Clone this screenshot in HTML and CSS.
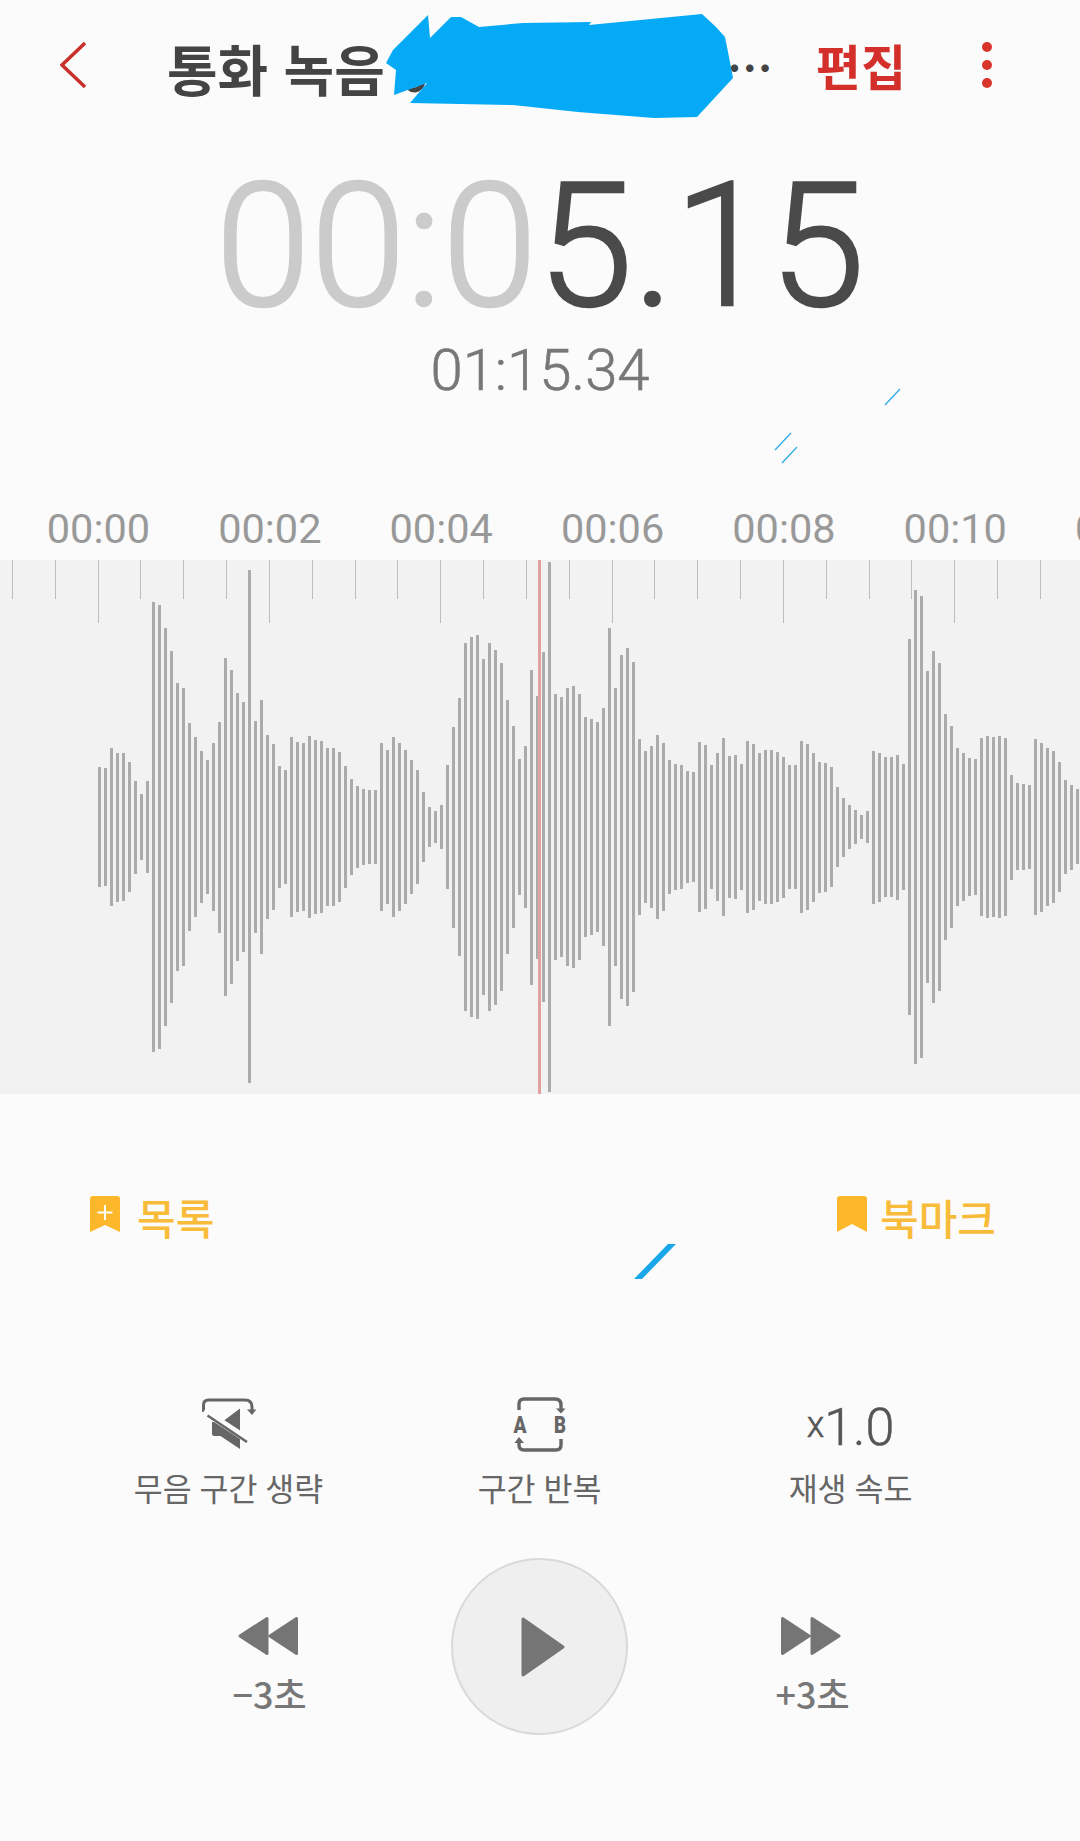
FILE: index.html
```html
<!DOCTYPE html>
<html lang="ko">
<head>
<meta charset="utf-8">
<title>통화 녹음</title>
<link rel="stylesheet" href="styles.css">
</head>
<body>
<div class="page">
  <header class="topbar">
    <svg class="back" width="26" height="48" viewBox="0 0 26 48"><path d="M25 2 2 24l23 22" fill="none" stroke="#c9302c" stroke-width="3.500"/></svg>
    <h1 class="title">통화 녹음</h1>
    <span class="more-text">…</span>
    <span class="edit">편집</span>
    <span class="kebab"><i></i><i></i><i></i></span>
  </header>

  <div class="timer"><span class="timer-dim">00:0</span>5.15</div>
  <div class="duration">01:15.34</div>

  <div class="ruler-labels">
    <span>00:00</span><span>00:02</span><span>00:04</span><span>00:06</span><span>00:08</span><span>00:10</span><span>00:12</span>
  </div>

  <section class="band">
    <div class="ticks">
      <i></i><i></i><i></i><i></i><i></i><i></i><i></i><i></i><i></i><i></i><i></i><i></i><i></i><i></i><i></i><i></i><i></i><i></i><i></i><i></i><i></i><i></i><i></i><i></i><i></i>
    </div>
    <div class="wave">
      <i style="--t:767;--b:887"></i><i style="--t:768;--b:886"></i><i style="--t:748;--b:906"></i><i style="--t:753;--b:902"></i><i style="--t:753;--b:901"></i><i style="--t:762;--b:892"></i><i style="--t:781;--b:874"></i><i style="--t:794;--b:860"></i><i style="--t:781;--b:873"></i><i style="--t:602;--b:1052"></i>
      <i style="--t:605;--b:1049"></i><i style="--t:628;--b:1026"></i><i style="--t:651;--b:1003"></i><i style="--t:683;--b:971"></i><i style="--t:688;--b:966"></i><i style="--t:723;--b:931"></i><i style="--t:737;--b:917"></i><i style="--t:751;--b:903"></i><i style="--t:760;--b:894"></i><i style="--t:743;--b:911"></i>
      <i style="--t:722;--b:933"></i><i style="--t:658;--b:996"></i><i style="--t:670;--b:984"></i><i style="--t:693;--b:961"></i><i style="--t:702;--b:952"></i><i style="--t:570;--b:1083"></i><i style="--t:721;--b:933"></i><i style="--t:700;--b:954"></i><i style="--t:735;--b:919"></i><i style="--t:744;--b:910"></i>
      <i style="--t:766;--b:888"></i><i style="--t:770;--b:884"></i><i style="--t:737;--b:917"></i><i style="--t:742;--b:912"></i><i style="--t:743;--b:911"></i><i style="--t:736;--b:918"></i><i style="--t:740;--b:914"></i><i style="--t:741;--b:913"></i><i style="--t:748;--b:906"></i><i style="--t:748;--b:906"></i>
      <i style="--t:752;--b:902"></i><i style="--t:766;--b:888"></i><i style="--t:779;--b:875"></i><i style="--t:786;--b:868"></i><i style="--t:789;--b:865"></i><i style="--t:790;--b:864"></i><i style="--t:790;--b:864"></i><i style="--t:743;--b:911"></i><i style="--t:750;--b:904"></i><i style="--t:737;--b:917"></i>
      <i style="--t:743;--b:911"></i><i style="--t:750;--b:904"></i><i style="--t:760;--b:894"></i><i style="--t:770;--b:884"></i><i style="--t:792;--b:862"></i><i style="--t:807;--b:847"></i><i style="--t:811;--b:843"></i><i style="--t:805;--b:849"></i><i style="--t:765;--b:889"></i><i style="--t:727;--b:928"></i>
      <i style="--t:698;--b:956"></i><i style="--t:643;--b:1011"></i><i style="--t:637;--b:1017"></i><i style="--t:635;--b:1019"></i><i style="--t:659;--b:995"></i><i style="--t:643;--b:1011"></i><i style="--t:650;--b:1005"></i><i style="--t:663;--b:991"></i><i style="--t:700;--b:954"></i><i style="--t:726;--b:928"></i>
      <i style="--t:759;--b:895"></i><i style="--t:746;--b:908"></i><i style="--t:670;--b:985"></i><i style="--t:696;--b:959"></i><i style="--t:652;--b:1002"></i><i style="--t:562;--b:1092"></i><i style="--t:694;--b:960"></i><i style="--t:697;--b:957"></i><i style="--t:688;--b:966"></i><i style="--t:686;--b:968"></i>
      <i style="--t:694;--b:960"></i><i style="--t:717;--b:937"></i><i style="--t:719;--b:935"></i><i style="--t:722;--b:932"></i><i style="--t:708;--b:946"></i><i style="--t:628;--b:1026"></i><i style="--t:688;--b:966"></i><i style="--t:655;--b:999"></i><i style="--t:648;--b:1006"></i><i style="--t:662;--b:992"></i>
      <i style="--t:739;--b:915"></i><i style="--t:751;--b:903"></i><i style="--t:746;--b:908"></i><i style="--t:735;--b:919"></i><i style="--t:743;--b:911"></i><i style="--t:760;--b:894"></i><i style="--t:764;--b:890"></i><i style="--t:765;--b:889"></i><i style="--t:771;--b:883"></i><i style="--t:772;--b:882"></i>
      <i style="--t:742;--b:912"></i><i style="--t:745;--b:909"></i><i style="--t:765;--b:889"></i><i style="--t:753;--b:901"></i><i style="--t:738;--b:916"></i><i style="--t:756;--b:898"></i><i style="--t:755;--b:899"></i><i style="--t:764;--b:890"></i><i style="--t:741;--b:913"></i><i style="--t:744;--b:910"></i>
      <i style="--t:753;--b:901"></i><i style="--t:750;--b:904"></i><i style="--t:750;--b:904"></i><i style="--t:752;--b:902"></i><i style="--t:757;--b:898"></i><i style="--t:765;--b:889"></i><i style="--t:765;--b:889"></i><i style="--t:741;--b:913"></i><i style="--t:744;--b:910"></i><i style="--t:753;--b:902"></i>
      <i style="--t:762;--b:893"></i><i style="--t:763;--b:892"></i><i style="--t:767;--b:887"></i><i style="--t:787;--b:867"></i><i style="--t:798;--b:857"></i><i style="--t:805;--b:849"></i><i style="--t:810;--b:844"></i><i style="--t:815;--b:839"></i><i style="--t:811;--b:843"></i><i style="--t:751;--b:904"></i>
      <i style="--t:753;--b:902"></i><i style="--t:757;--b:897"></i><i style="--t:757;--b:897"></i><i style="--t:755;--b:900"></i><i style="--t:764;--b:890"></i><i style="--t:639;--b:1015"></i><i style="--t:590;--b:1064"></i><i style="--t:596;--b:1058"></i><i style="--t:671;--b:983"></i><i style="--t:651;--b:1003"></i>
      <i style="--t:663;--b:991"></i><i style="--t:714;--b:940"></i><i style="--t:726;--b:928"></i><i style="--t:748;--b:906"></i><i style="--t:753;--b:901"></i><i style="--t:758;--b:896"></i><i style="--t:759;--b:895"></i><i style="--t:738;--b:916"></i><i style="--t:736;--b:918"></i><i style="--t:737;--b:917"></i>
      <i style="--t:736;--b:918"></i><i style="--t:738;--b:916"></i><i style="--t:775;--b:880"></i><i style="--t:783;--b:870"></i><i style="--t:784;--b:870"></i><i style="--t:785;--b:869"></i><i style="--t:739;--b:915"></i><i style="--t:743;--b:912"></i><i style="--t:748;--b:906"></i><i style="--t:751;--b:903"></i>
      <i style="--t:762;--b:892"></i><i style="--t:780;--b:874"></i><i style="--t:785;--b:870"></i><i style="--t:789;--b:864"></i>
    </div>
    <div class="playhead"></div>
  </section>

  <div class="bookmarks">
    <div class="bm">
      <svg width="30" height="36" viewBox="0 0 30 36"><path d="M0 3Q0 0 3 0H27Q30 0 30 3V36L15 29 0 36Z" fill="#fdb72a"/><path d="M15 9V24M7.500 16.500H22.500" stroke="#fff" stroke-width="2" fill="none"/></svg>
      <span>목록</span>
    </div>
    <div class="bm bm-right">
      <svg width="30" height="36" viewBox="0 0 30 36"><path d="M0 3Q0 0 3 0H27Q30 0 30 3V36L15 28 0 36Z" fill="#fdb72a"/></svg>
      <span>북마크</span>
    </div>
  </div>

  <div class="options">
    <div class="opt">
      <div class="opt-icon">
        <svg width="54" height="52" viewBox="0 0 54 52">
          <path d="M1.500 14V7Q1.500 2 6.500 2H43Q50 2 50 9V12" fill="none" stroke="#666" stroke-width="3"/>
          <path d="M45 11.500H54.500L50 17Z" fill="#666"/>
          <path d="M10 24H20L38 10.500V51L18.500 38H12.500Q10 38 10 35.500Z" fill="#666"/>
          <path d="M2 13 46 42" stroke="#fbfbfb" stroke-width="7" fill="none"/>
          <path d="M5.500 17.500 45 44" stroke="#666" stroke-width="2.500" fill="none"/>
        </svg>
      </div>
      <div class="opt-label">무음 구간 생략</div>
    </div>
    <div class="opt">
      <div class="opt-icon">
        <svg width="54" height="55" viewBox="0 0 54 55">
          <path d="M6 13V7Q6 2 11 2H42Q48 2 48 8V12M48 42V48Q48 53 43 53H11Q6 53 6 48V45" fill="none" stroke="#666" stroke-width="3.400"/>
          <path d="M43 11.500H52.500L48 16.500ZM1.500 46H11L6 40Z" fill="#666"/>
          <text class="ab" x="0.500" y="36" textLength="13" lengthAdjust="spacingAndGlyphs">A</text>
          <text class="ab" x="41" y="36" textLength="12" lengthAdjust="spacingAndGlyphs">B</text>
        </svg>
      </div>
      <div class="opt-label">구간 반복</div>
    </div>
    <div class="opt">
      <div class="opt-icon speed"><small>x</small>1.0</div>
      <div class="opt-label">재생 속도</div>
    </div>
  </div>

  <div class="transport">
    <div class="skip">
      <svg width="60" height="40" viewBox="0 0 60 40"><path d="M2 20 29 2.500V37.500ZM32 20 58.500 2.500V37.500Z" fill="#757575" stroke="#757575" stroke-width="3" stroke-linejoin="round"/></svg>
      <span>−3초</span>
    </div>
    <div class="play">
      <svg width="44" height="60" viewBox="0 0 44 60"><path d="M2 2 42 30 2 58Z" fill="#757575" stroke="#757575" stroke-width="3" stroke-linejoin="round"/></svg>
    </div>
    <div class="skip">
      <svg width="60" height="40" viewBox="0 0 60 40"><path d="M1.500 2.500 28 20 1.500 37.500ZM31 2.500 58 20 31 37.500Z" fill="#757575" stroke="#757575" stroke-width="3" stroke-linejoin="round"/></svg>
      <span>+3초</span>
    </div>
  </div>

  <svg class="scribble" width="1080" height="1841" viewBox="0 0 1080 1841">
    <path d="M408 83Q408 90 415 90 421 89 423 82" fill="none" stroke="#444" stroke-width="5"/>
    <path d="M428 15 430 38 451 17H461L479 27 523 23 591 22 589 25 702 14 716 27 725 37 729 57 733 78 697 117 654 118 578 112 513 105 410 103 427 83 394 95 396 70 386 63 393 50Z" fill="#05aaf6"/>
    <path d="M900 389 885 405M791 433 775 450M797 447 782 463" stroke="#2aa9e8" stroke-width="1.200" fill="none"/>
    <path d="M668 1244H676L642 1279H634Z" fill="#1aa7ea"/>
  </svg>
</div>
</body>
</html>
```
FILE: styles.css
```css
* { box-sizing: border-box; }
html, body { margin: 0; padding: 0; }
body { width: 1080px; height: 1841px; overflow: hidden; background: #fbfbfb; }
.page {
  position: relative;
  width: 1080px;
  height: 1841px;
  overflow: hidden;
  background: #fbfbfb;
  font-family: "Noto Sans CJK KR", "Noto Sans", sans-serif;
}

/* top bar */
.topbar { display: flex; align-items: center; height: 130px; padding-left: 60px; }
.back { flex: none; }
.title { margin: 3px 0 0 81px; font-size: 55px; font-weight: 700; line-height: 60px; color: #444; white-space: nowrap; }
.more-text { margin-left: auto; margin-right: 43px; font-size: 46px; font-weight: 700; color: #444; line-height: 60px; }
.edit { margin-right: 76px; font-size: 49px; font-weight: 700; color: #d3302c; line-height: 60px; }
.kebab { display: flex; flex-direction: column; gap: 8px; margin-right: 88px; }
.kebab i { display: block; width: 10px; height: 10px; border-radius: 50%; background: #d9342b; }

/* timers */
.timer {
  margin-top: 30px;
  height: 172px;
  font-family: Roboto, sans-serif;
  font-weight: 300;
  font-size: 172px;
  line-height: 172px;
  text-align: center;
  color: #4a4a4a;
  -webkit-text-stroke: 2.5px currentColor;
}
.timer-dim { color: #cbcbcb; }
.duration {
  margin-top: 10px;
  height: 57px;
  font-family: Roboto, sans-serif;
  font-weight: 300;
  font-size: 58px;
  line-height: 57px;
  text-align: center;
  color: #777;
  -webkit-text-stroke: 0.6px currentColor;
}

/* time ruler labels */
.ruler-labels {
  display: flex;
  margin-top: 109px;
  height: 52px;
  padding-left: 12.8px;
  font-family: Roboto, sans-serif;
  font-size: 41.500px;
  line-height: 41px;
  color: #999;
}
.ruler-labels span { flex: none; width: 171.36px; text-align: center; }

/* waveform band */
.band { display: grid; height: 534px; background: #f2f2f2; overflow: hidden; }
.band > * { grid-area: 1 / 1; }
.ticks { display: flex; align-items: flex-start; padding-left: 12px; }
.ticks i { flex: none; display: block; width: 42.84px; height: 39px; border-left: 1px solid #bdbdbd; }
.ticks i:nth-child(4n+3) { height: 63px; }
.wave { display: flex; align-items: flex-start; gap: 3px; padding-left: 98px; }
.wave i {
  flex: none;
  display: block;
  width: 3px;
  margin-top: calc((var(--t) - 560) * 1px);
  height: calc((var(--b) - var(--t)) * 1px);
  background: #ababab;
}
.playhead { width: 3px; margin-left: 538px; background: #e2a0a0; }

/* bookmarks */
.bookmarks { display: flex; justify-content: space-between; align-items: center; height: 60px; margin-top: 93px; padding: 0 84px 0 90px; }
.bm { display: flex; align-items: center; gap: 17px; font-size: 42px; font-weight: 500; line-height: 60px; color: #f9bb3a; }
.bm-right { gap: 13px; }
.bm svg { flex: none; margin-top: -6px; }

/* options */
.options { display: flex; margin-top: 147px; padding-left: 73px; }
.opt { flex: none; width: 311px; display: flex; flex-direction: column; align-items: center; }
.opt-icon { display: flex; align-items: center; justify-content: center; height: 60px; }
.opt-label { margin-top: 13px; font-size: 31.500px; line-height: 40px; color: #666; white-space: nowrap; word-spacing: -1px; }
.ab { font-family: Roboto, sans-serif; font-weight: 900; font-size: 24px; fill: #666; }
.speed { padding-top: 7px; font-family: Roboto, sans-serif; font-weight: 300; font-size: 52px; line-height: 53px; color: #555; align-items: baseline; -webkit-text-stroke: 0.5px currentColor; }
.speed small { font-size: 36px; transform: translateY(-8px); }

/* transport */
.transport { display: flex; align-items: flex-start; gap: 83px; margin-top: 51px; padding-left: 168px; }
.skip { flex: none; width: 200px; display: flex; flex-direction: column; align-items: center; margin-top: 58px; color: #777; }
.skip span { margin-top: 17px; padding-left: 3px; font-size: 36px; font-weight: 500; line-height: 40px; }
.play {
  flex: none;
  display: flex;
  align-items: center;
  justify-content: center;
  width: 177px;
  height: 177px;
  border: 2px solid #d9d9d9;
  border-radius: 50%;
  background: #efefef;
}
.play svg { margin-left: 7px; }

/* marks drawn on top of the screenshot */
.scribble { position: absolute; left: 0; top: 0; pointer-events: none; }
```
